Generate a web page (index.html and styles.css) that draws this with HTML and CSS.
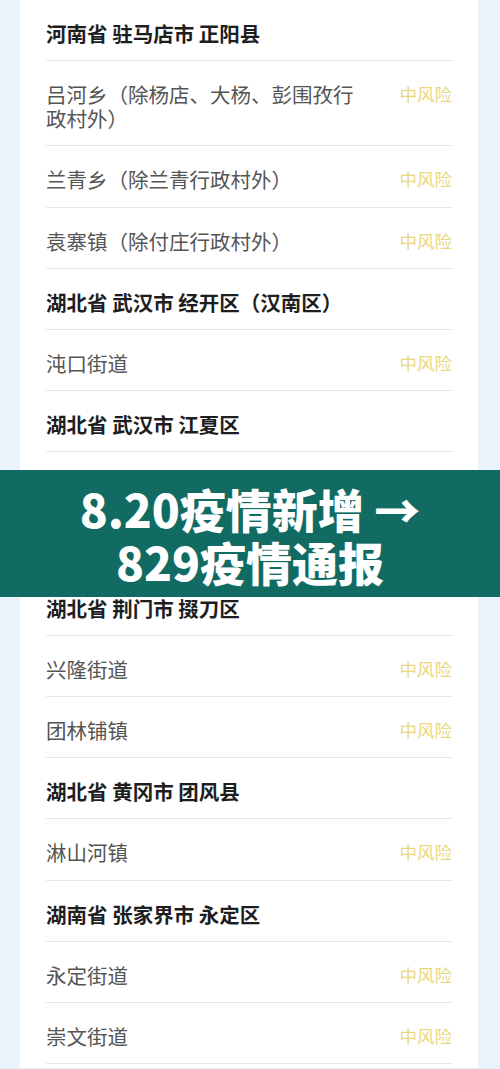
FILE: index.html
```html
<!DOCTYPE html>
<html lang="zh-CN">
<head>
    <meta charset="UTF-8">
    <meta name="viewport" content="width=device-width, initial-scale=1.0">
    <title>中风险地区</title>
    <link rel="stylesheet" href="styles.css">
</head>
<body>

<div class="page">
    <div class="card">
        <div class="row region">河南省 驻马店市 正阳县</div>
        <div class="row">
            <span class="place">吕河乡（除杨店、大杨、彭围孜行政村外）</span>
            <span class="risk">中风险</span>
        </div>
        <div class="row">
            <span class="place">兰青乡（除兰青行政村外）</span>
            <span class="risk">中风险</span>
        </div>
        <div class="row">
            <span class="place">袁寨镇（除付庄行政村外）</span>
            <span class="risk">中风险</span>
        </div>

        <div class="row region">湖北省 武汉市 经开区（汉南区）</div>
        <div class="row">
            <span class="place">沌口街道</span>
            <span class="risk">中风险</span>
        </div>

        <div class="row region">湖北省 武汉市 江夏区</div>
        <div class="row">
            <span class="place">纸坊街道</span>
            <span class="risk">中风险</span>
        </div>
        <div class="row">
            <span class="place">郑店街道</span>
            <span class="risk">中风险</span>
        </div>

        <div class="row region">湖北省 荆门市 掇刀区</div>
        <div class="row">
            <span class="place">兴隆街道</span>
            <span class="risk">中风险</span>
        </div>
        <div class="row">
            <span class="place">团林铺镇</span>
            <span class="risk">中风险</span>
        </div>

        <div class="row region">湖北省 黄冈市 团风县</div>
        <div class="row">
            <span class="place">淋山河镇</span>
            <span class="risk">中风险</span>
        </div>

        <div class="row region">湖南省 张家界市 永定区</div>
        <div class="row">
            <span class="place">永定街道</span>
            <span class="risk">中风险</span>
        </div>
        <div class="row">
            <span class="place">崇文街道</span>
            <span class="risk">中风险</span>
        </div>
    </div>
</div>

<!-- 标题横幅，盖在列表上面 -->
<div class="banner">
    8.20疫情新增 →<br>
    829疫情通报
</div>

</body>
</html>
```

FILE: styles.css
```css
body {
    margin: 0;
    background-color: #eaf3fb;
    font-family: "Noto Sans CJK SC", "Noto Sans", sans-serif;
    position: relative;
    height: 1069px;
    overflow: hidden;
}

.page {
    padding: 0 22px 0 20px;
    height: 100%;
    box-sizing: border-box;
}

.card {
    background-color: #ffffff;
    padding: 0 26px;
    height: 100%;
    box-sizing: border-box;
}

.row {
    display: flex;
    align-items: flex-start;
    gap: 40px;
    padding: 21px 0 15.2px;
    border-bottom: 1px solid #e6e6e6;
    font-size: 20.5px;
    line-height: 24px;
    color: #555555;
}
.row:first-child {
    border-top: 1px solid #e6e6e6;
    margin-top: -1px;
}

.region {
    color: #1e1e1e;
    font-weight: bold;
}

.place {
    flex: 1;
}

.risk {
    font-size: 17.5px;
    color: #e9d77e;
    white-space: nowrap;
}

.banner {
    position: absolute;
    top: 470px;
    left: 0;
    right: 0;
    height: 127px;
    box-sizing: border-box;
    padding-top: 12px;
    background-color: #126b62;
    color: #ffffff;
    font-size: 46px;
    font-weight: 900;
    line-height: 53px;
    text-align: center;
}
```
